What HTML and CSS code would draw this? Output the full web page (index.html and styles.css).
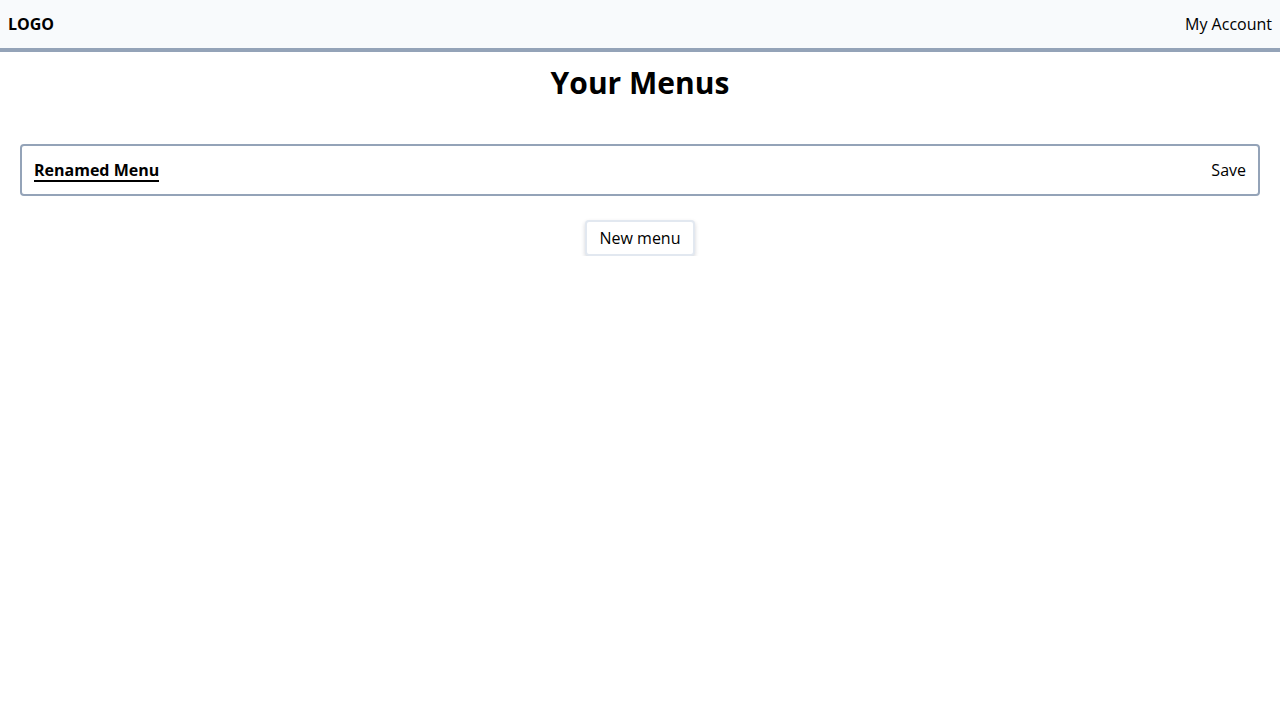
FILE: index.html
```html
<!DOCTYPE html>
<html lang="en">
<head>
<meta charset="utf-8">
<title>Your Menus</title>
<link rel="stylesheet" href="styles.css">
</head>
<body>
<header class="topbar">
  <span class="logo">LOGO</span>
  <a class="account" href="#">My Account</a>
</header>
<main class="main">
  <h1 class="title">Your Menus</h1>
  <ul class="menu-list">
    <li class="menu-card">
      <span class="menu-name">Renamed Menu</span>
      <button class="save-btn">Save</button>
    </li>
  </ul>
  <div class="actions">
    <button class="new-btn">New menu</button>
  </div>
</main>
</body>
</html>
```

FILE: styles.css
```css
* { box-sizing: border-box; }
html, body {
  margin: 0;
  padding: 0;
  background: #ffffff;
  color: #000000;
  font-family: "Open Sans", "Noto Sans", sans-serif;
  font-size: 16px;
  line-height: 24px;
}
.topbar {
  height: 52px;
  display: flex;
  align-items: center;
  justify-content: space-between;
  padding: 0 8px;
  background: #f8fafc;
  border-bottom: 4px solid #94a3b8;
}
.logo { font-weight: 700; }
.account { color: #000; text-decoration: none; }
.main { padding: 13px 20px 0 20px; }
.title {
  margin: 0;
  text-align: center;
  font-size: 30px;
  line-height: 36px;
  font-weight: 700;
}
.menu-list {
  list-style: none;
  margin: 43px 0 0 0;
  padding: 0;
}
.menu-card {
  display: flex;
  align-items: center;
  justify-content: space-between;
  height: 52px;
  padding: 0 12px;
  border: 2px solid #94a3b8;
  border-radius: 4px;
}
.menu-name {
  font-weight: 700;
  line-height: 20px;
  border-bottom: 2px solid #000;
  margin-top: 2px;
}
.save-btn {
  font: inherit;
  background: none;
  border: none;
  padding: 0;
  color: #000;
}
.actions {
  display: flex;
  justify-content: center;
  margin-top: 24px;
}
.new-btn {
  font: inherit;
  color: #000;
  background: #fff;
  border: 2px solid #e2e8f0;
  border-radius: 4px;
  padding: 4px 12px;
  height: 36px;
  box-shadow: 0 2px 4px rgba(15, 23, 42, 0.18);
}
```
